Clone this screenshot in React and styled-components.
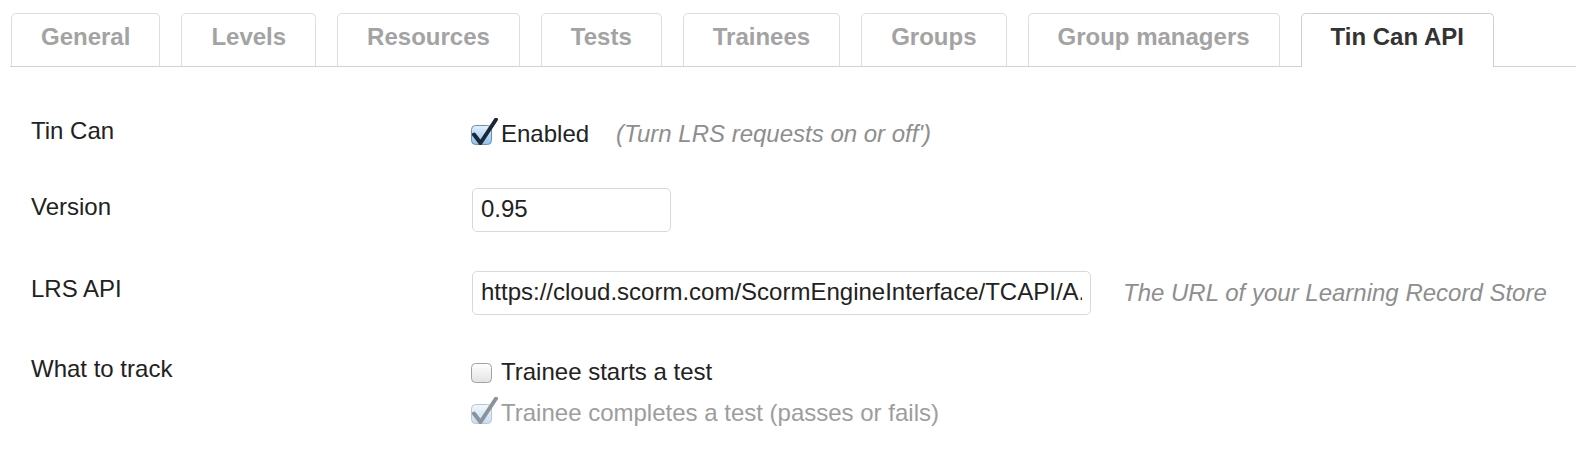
import styled, { createGlobalStyle } from 'styled-components';

const GlobalStyle = createGlobalStyle`
  body {
    margin: 0;
    background: #fff;
    font-family: 'Liberation Sans', Helvetica, Arial, sans-serif;
    color: #222;
  }
`;

const Page = styled.div`
  padding: 13px 0 0 10px;
`;

const TabBar = styled.ul`
  display: flex;
  align-items: flex-end;
  gap: 21px;
  margin: 0;
  padding: 0 0 0 1px;
  list-style: none;
  border-bottom: 1px solid #d2d2d2;
`;

const Tab = styled.li`
  height: ${p => (p.$active ? '54px' : '53px')};
  margin-bottom: ${p => (p.$active ? '-1px' : '0')};
  box-sizing: border-box;
  padding: 8px 29px 0;
  border: 1px solid ${p => (p.$active ? '#cfcfcf' : '#dedede')};
  border-bottom: none;
  border-radius: 5px 5px 0 0;
  background: #fff;
  font-size: 24px;
  font-weight: bold;
  line-height: 30px;
  white-space: nowrap;
  color: ${p => (p.$active ? '#333' : '#a3a3a3')};
  cursor: pointer;
`;

const Form = styled.div`
  padding: 49px 0 0 21px;
  display: flex;
  flex-direction: column;
  gap: 39px;
`;

const Row = styled.div`
  display: flex;
  align-items: flex-start;
`;

const Label = styled.div`
  width: 441px;
  flex-shrink: 0;
  padding-top: ${p => p.$offset || 0}px;
  font-size: 24px;
  line-height: 30px;
  color: #222;
`;

const Control = styled.div`
  display: flex;
  align-items: center;
  padding-top: ${p => p.$offset || 0}px;
`;

const CheckList = styled.div`
  display: flex;
  flex-direction: column;
  gap: 11px;
  padding-top: 3px;
`;

const CheckLine = styled.label`
  display: flex;
  align-items: center;
  gap: 2px;
  margin-left: -1px;
  font-size: 24px;
  line-height: 30px;
  color: ${p => (p.$disabled ? '#9d9d9d' : '#222')};
`;

const BoxSvg = styled.svg`
  flex-shrink: 0;
  margin: -6px 0 -1px;
  opacity: ${p => (p.$disabled ? 0.5 : 1)};
`;

const Hint = styled.span`
  margin-left: ${p => p.$gap || 28}px;
  font-size: 24px;
  line-height: 30px;
  font-style: italic;
  color: #8e8e8e;
  white-space: nowrap;
`;

const TextInput = styled.input`
  width: ${p => p.$width}px;
  height: 44px;
  box-sizing: border-box;
  padding: 5px 8px 7px;
  border: 1px solid #d9d9d9;
  border-radius: 5px;
  font-family: 'Liberation Sans', Helvetica, Arial, sans-serif;
  font-size: 24px;
  line-height: 30px;
  color: #222;
  background: #fff;
  outline: none;
`;

const CheckBox = ({ checked, disabled }) => (
  <BoxSvg width="28" height="28" viewBox="0 0 28 28" $disabled={disabled}>
    <defs>
      <linearGradient id="boxOn" x1="0" y1="0" x2="0" y2="1">
        <stop offset="0" stopColor="#e4f0fc" />
        <stop offset="0.5" stopColor="#b9d8f6" />
        <stop offset="1" stopColor="#8fc0ef" />
      </linearGradient>
      <linearGradient id="boxOff" x1="0" y1="0" x2="0" y2="1">
        <stop offset="0" stopColor="#ffffff" />
        <stop offset="1" stopColor="#e3e3e3" />
      </linearGradient>
    </defs>
    <rect
      x="0.5"
      y="7.5"
      width="20"
      height="19"
      rx="4"
      fill={checked ? 'url(#boxOn)' : 'url(#boxOff)'}
      stroke={checked ? '#6f8fb3' : '#a2a2a2'}
    />
    {checked && (
      <path
        d="M3 16.5 L9.5 25 L25 1.5"
        fill="none"
        stroke="#1b2736"
        strokeWidth="4"
        strokeLinecap="round"
        strokeLinejoin="round"
      />
    )}
  </BoxSvg>
);

const tabs = ['General', 'Levels', 'Resources', 'Tests', 'Trainees', 'Groups', 'Group managers', 'Tin Can API'];

const App = () => {
  return (
    <Page>
      <GlobalStyle />
      <TabBar>
        {tabs.map(t => (
          <Tab key={t} $active={t === 'Tin Can API'}>{t}</Tab>
        ))}
      </TabBar>
      <Form>
        <Row>
          <Label>Tin Can</Label>
          <Control $offset={3}>
            <CheckLine>
              <CheckBox checked />
              Enabled
            </CheckLine>
            <Hint $gap={27}>(Turn LRS requests on or off')</Hint>
          </Control>
        </Row>
        <Row>
          <Label $offset={4}>Version</Label>
          <Control>
            <TextInput $width={199} defaultValue="0.95" />
          </Control>
        </Row>
        <Row>
          <Label $offset={3}>LRS API</Label>
          <Control>
            <TextInput $width={619} defaultValue="https://cloud.scorm.com/ScormEngineInterface/TCAPI/A." />
            <Hint $gap={32}>The URL of your Learning Record Store</Hint>
          </Control>
        </Row>
        <Row>
          <Label>What to track</Label>
          <CheckList>
            <CheckLine>
              <CheckBox />
              Trainee starts a test
            </CheckLine>
            <CheckLine $disabled>
              <CheckBox checked disabled />
              Trainee completes a test (passes or fails)
            </CheckLine>
          </CheckList>
        </Row>
      </Form>
    </Page>
  );
};

export default App;
